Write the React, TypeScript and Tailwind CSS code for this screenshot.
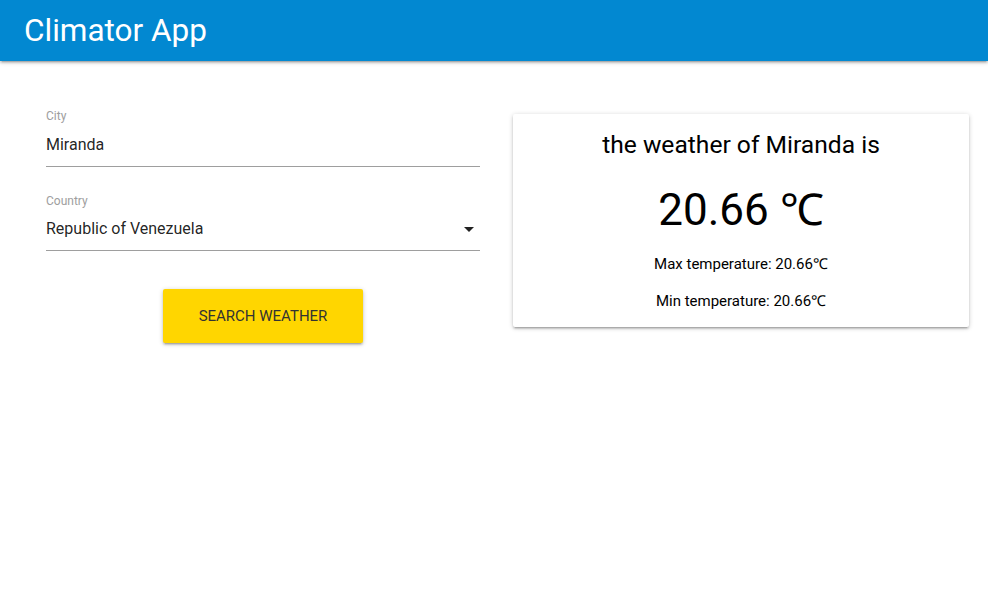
export default function App() {
  return (
    <div className="min-h-screen bg-white font-['Roboto','Liberation_Sans',sans-serif] text-[rgba(0,0,0,0.87)]">
      <nav className="flex h-[61px] items-center bg-[#0288d1] px-6 shadow-[0_2px_2px_0_rgba(0,0,0,0.14),0_3px_1px_-2px_rgba(0,0,0,0.12),0_1px_5px_0_rgba(0,0,0,0.2)]">
        <span className="text-[31.5px] text-white">Climator App</span>
      </nav>

      <div className="flex items-start pl-[46px] pt-[47px]">
        {/* Search form */}
        <div className="flex w-[434px] flex-col">
          <Field label="City" value="Miranda" />
          <Field label="Country" value="Republic of Venezuela" select />
          <div className="mt-[12px] flex justify-center">
            <button className="h-[54px] w-[200px] rounded-[2px] bg-[#ffd600] text-[15px] uppercase text-[#333] shadow-[0_2px_2px_0_rgba(0,0,0,0.14),0_3px_1px_-2px_rgba(0,0,0,0.12),0_1px_5px_0_rgba(0,0,0,0.2)]">
              Search weather
            </button>
          </div>
        </div>

        {/* Result card */}
        <div className="ml-[33px] mt-[6px] flex h-[213px] w-[456px] flex-col items-center rounded-[2px] bg-white text-black shadow-[0_2px_2px_0_rgba(0,0,0,0.14),0_3px_1px_-2px_rgba(0,0,0,0.12),0_1px_5px_0_rgba(0,0,0,0.2)]">
          <h2 className="mt-[15px] text-[24.6px] leading-[32px]">the weather of Miranda is</h2>
          <p className="mt-[21px] text-[44px] leading-[56px]">20.66 &#8451;</p>
          <p className="mt-[16px] text-[15px] leading-[20px]">Max temperature: 20.66&#8451;</p>
          <p className="mt-[17px] text-[15px] leading-[20px]">Min temperature: 20.66&#8451;</p>
        </div>
      </div>
    </div>
  );
}

function Field({ label, value, select }: { label: string; value: string; select?: boolean }) {
  return (
    <div className="mb-[26px] flex flex-col">
      <label className="text-xs leading-[16px] text-[#9e9e9e]">{label}</label>
      <div className="mt-[8px] flex h-[24px] items-center justify-between">
        <span className={`${select ? "" : "translate-y-px"} text-base`}>{value}</span>
        {select && (
          <svg width="24" height="24" viewBox="0 0 24 24" className="-mr-[1px]">
            <path d="M7 10l5 5 5-5z" fill="rgba(0,0,0,0.87)" />
          </svg>
        )}
      </div>
      <div className={`${select ? "mt-[9px]" : "mt-[10px]"} h-px bg-[#9e9e9e]`} />
    </div>
  );
}
